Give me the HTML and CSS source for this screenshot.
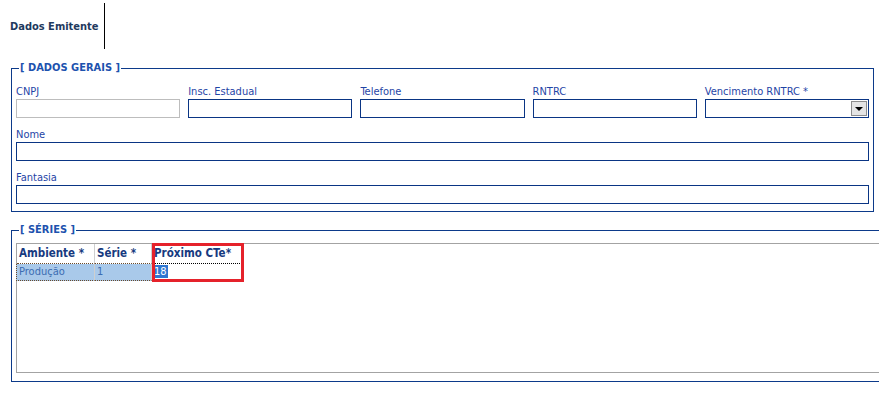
FILE: index.html
```html
<!DOCTYPE html>
<html lang="pt-BR">
<head>
    <meta charset="UTF-8">
    <meta name="viewport" content="width=device-width, initial-scale=1.0">
    <title>Dados Emitente</title>
    <link rel="stylesheet" href="styles.css">
</head>
<body>
    <div class="tabbar">
        <div class="tab">Dados Emitente</div>
    </div>

    <fieldset class="group general">
        <legend>[ DADOS GERAIS ]</legend>
        <div class="row five">
            <div class="field">
                <label>CNPJ</label>
                <div class="box disabled"></div>
            </div>
            <div class="field">
                <label>Insc. Estadual</label>
                <div class="box"></div>
            </div>
            <div class="field">
                <label>Telefone</label>
                <div class="box"></div>
            </div>
            <div class="field">
                <label>RNTRC</label>
                <div class="box"></div>
            </div>
            <div class="field">
                <label>Vencimento RNTRC *</label>
                <div class="box combo"><span class="drop"><i></i></span></div>
            </div>
        </div>
        <div class="row">
            <div class="field">
                <label>Nome</label>
                <div class="box"></div>
            </div>
        </div>
        <div class="row">
            <div class="field">
                <label>Fantasia</label>
                <div class="box"></div>
            </div>
        </div>
    </fieldset>

    <fieldset class="group series">
        <legend>[ SÉRIES ]</legend>
        <div class="grid">
            <div class="grid-row head">
                <div class="cell c1">Ambiente *</div>
                <div class="cell c2">Série *</div>
                <div class="cell c3">Próximo CTe*</div>
            </div>
            <div class="grid-row current">
                <div class="cell c1">Produção</div>
                <div class="cell c2">1</div>
                <div class="cell c3"><span class="sel">18</span></div>
            </div>
            <div class="mark"></div>
        </div>
    </fieldset>
</body>
</html>
```

FILE: styles.css
```css
body {
    margin: 0;
    background: #ffffff;
    font-family: "DejaVu Sans Condensed", "Liberation Sans", Arial, sans-serif;
    font-size: 11px;
    overflow: hidden;
}

.tabbar {
    height: 49px;
    padding-top: 3px;
    box-sizing: border-box;
}
.tab {
    width: 94px;
    height: 46px;
    margin-left: 10px;
    border-right: 1px solid #000;
    display: flex;
    align-items: center;
    font-size: 11px;
    font-weight: bold;
    color: #1f3a5e;
}

.group {
    margin: 12px 0 0 11px;
    padding: 9px 4px 7px 4px;
    border: 1px solid #0c3a8a;
    min-width: 0;
}
.group legend {
    margin-left: 3px;
    padding: 0 1px;
    font-size: 11px;
    font-weight: bold;
    line-height: 14px;
    color: #1d52ae;
}
.general {
    width: 853px;
}

.row {
    margin-bottom: 9px;
}
.row:last-child {
    margin-bottom: 0;
}
.five {
    display: grid;
    grid-template-columns: repeat(5, 1fr);
    column-gap: 8px;
}
.field label {
    display: block;
    height: 15px;
    line-height: 15px;
    color: #1f45a6;
}
.box {
    height: 19px;
    box-sizing: border-box;
    border: 1px solid #0a3584;
    background: #fff;
    position: relative;
}
.box.disabled {
    border-color: #bdbdbd;
}
.combo {
    display: flex;
    justify-content: flex-end;
    align-items: stretch;
    padding: 1px;
}
.drop {
    width: 16px;
    background: #e4e4e4;
    border: 1px solid #8c8c8c;
    box-sizing: border-box;
    display: flex;
    align-items: center;
    justify-content: center;
}
.drop i {
    width: 0;
    height: 0;
    border-left: 4px solid transparent;
    border-right: 4px solid transparent;
    border-top: 4px solid #000;
    margin-top: 1px;
}

.series {
    margin-top: 11px;
    width: 900px;
    padding-top: 6px;
    padding-bottom: 8px;
}
.grid {
    position: relative;
    height: 130px;
    box-sizing: border-box;
    border: 1px solid #a3a3a3;
    border-right: none;
}
.grid-row {
    display: flex;
}
.cell {
    box-sizing: border-box;
    padding-left: 2px;
    border-right: 1px solid #cfcfcf;
    white-space: nowrap;
}
.c1 { width: 78px; }
.c2 { width: 57px; }
.c3 { width: 90px; border-right: none; }

.head .cell {
    height: 20px;
    line-height: 19px;
    font-size: 11.5px;
    font-weight: bold;
    color: #173a80;
    border-bottom: 1px dotted #6b4a2a;
}
.head .c3 {
    border-bottom-color: #000;
}
.current .cell {
    height: 17px;
    line-height: 16px;
    color: #3b6cb2;
    background: #a9c9ea;
    border-bottom: 1px dotted #6b4a2a;
}
.current .c1 {
    border-left: 1px dotted #6b4a2a;
    margin-left: -1px;
    width: 79px;
}
.current .c3 {
    background: #fff;
    border-bottom: none;
    padding-left: 1px;
}
.sel {
    display: inline-block;
    background: #2f77d1;
    color: #fff;
    line-height: 13px;
    padding: 0 1px;
}

.mark {
    position: absolute;
    left: 135px;
    top: -1px;
    width: 92px;
    height: 39px;
    box-sizing: border-box;
    border: 3px solid #e5222b;
}
```
